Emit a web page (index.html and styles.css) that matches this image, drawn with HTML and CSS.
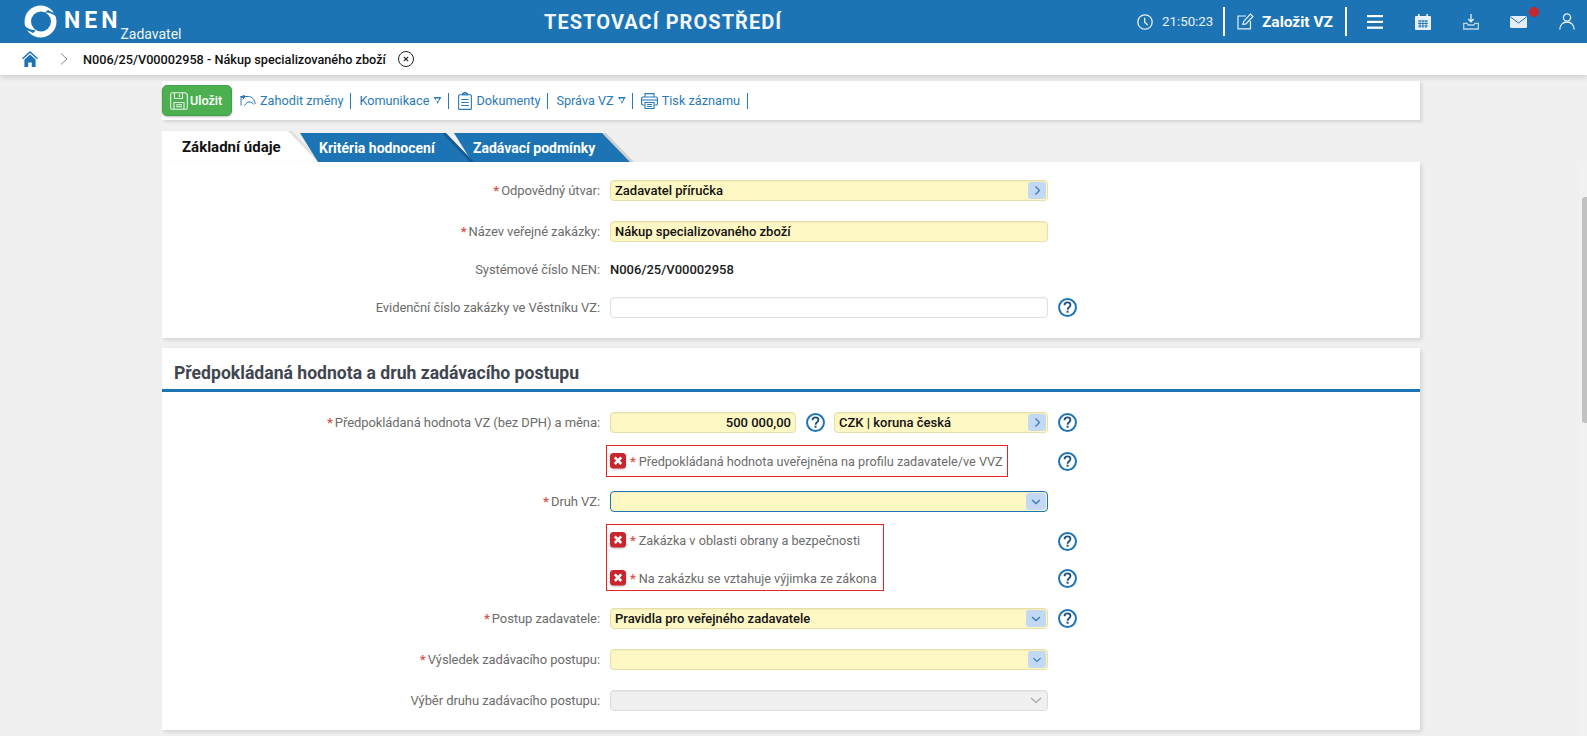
FILE: index.html
```html
<!DOCTYPE html>
<html lang="cs">
<head>
<meta charset="utf-8">
<title>NEN</title>
<link rel="stylesheet" href="styles.css">
</head>
<body>
<svg class="sprite" aria-hidden="true">
  <symbol id="help" viewBox="0 0 20 20">
    <circle cx="10" cy="10" r="8.900" fill="none" stroke="#1d74b4" stroke-width="2.100"/>
    <path d="M6.900 7.600C6.900 5.700 8.300 4.700 10 4.700s3.100 1 3.100 2.700c0 2.400-3 2.400-3 4.900" fill="none" stroke="#1f4f7c" stroke-width="1.900"/>
    <rect x="9" y="13.400" width="2.100" height="2.100" fill="#1f4f7c"/>
  </symbol>
  <symbol id="err" viewBox="0 0 16 16">
    <rect x="0" y="0" width="16" height="15.500" rx="3.500" fill="#c9252d"/>
    <path d="M4.800 4.400l6.400 6.600M11.200 4.400l-6.400 6.600" stroke="#fff" stroke-width="2.600"/>
  </symbol>
  <symbol id="chev-down" viewBox="0 0 20 17">
    <path d="M6 7l4 3.600L14 7" fill="none" stroke="#3b78bd" stroke-width="1.300"/>
  </symbol>
  <symbol id="chev-right" viewBox="0 0 18 17">
    <path d="M7.500 4.500l4 4-4 4" fill="none" stroke="#3b78bd" stroke-width="1.300"/>
  </symbol>
</svg>

<header class="topbar">
  <div class="brand">
    <svg class="logo" width="33" height="33" viewBox="0 0 33 33">
      <circle cx="16.500" cy="16.500" r="16" fill="#fff"/>
      <circle cx="17" cy="16.500" r="10" fill="#1d74b4"/>
      <path d="M21 7.500C25 7.800 29 8.600 33 12L33 8C30 8 27 7 24 5z" fill="#1d74b4"/>
      <path d="M12 25.500C8.500 25 4 24 0 20.500L0 25C3 25 6 26 9 28z" fill="#1d74b4"/>
    </svg>
    <span class="brand-name">NEN</span>
    <span class="brand-role">Zadavatel</span>
  </div>
  <div class="env">TESTOVACÍ PROSTŘEDÍ</div>
  <div class="top-actions">
    <svg class="ti-clock" width="16" height="16" viewBox="0 0 16 16" fill="none" stroke="#e8f1f8" stroke-width="1.300"><circle cx="8" cy="8" r="7.200"/><path d="M7.700 3.800V8.200L10.700 11"/></svg>
    <span class="clock">21:50:23</span>
    <span class="vline"></span>
    <a class="create">
      <svg width="17" height="17" viewBox="0 0 17 17" fill="none" stroke="#e8f1f8" stroke-width="1.200"><path d="M9 3H1v13h12.500V8"/><path d="M6 11.500l.6-3L13.500 1l2.500 2.400-7 7.500z"/></svg>
      <span>Založit VZ</span>
    </a>
    <span class="vline vline-2"></span>
    <svg class="ti" width="16" height="14" viewBox="0 0 16 14" fill="#fff"><rect y="0" width="16" height="2.200"/><rect y="5.800" width="16" height="2.200"/><rect y="11.600" width="16" height="2.200"/></svg>
    <svg class="ti" width="16" height="16" viewBox="0 0 16 16"><rect y="2" width="16" height="14" rx="1" fill="#e8f1f8"/><rect x="3" y="0" width="1.600" height="3" fill="#fff"/><rect x="11.400" y="0" width="1.600" height="3" fill="#fff"/><path d="M3 7h10M3 9.500h10M3 12h10M5 6v8M8 6v8M11 6v8" stroke="#1d74b4" stroke-width=".9"/></svg>
    <svg class="ti" width="16" height="16" viewBox="0 0 16 16" fill="none" stroke="#e8f1f8" stroke-width="1.300"><path d="M8 0v7.500M5.300 5l2.700 2.800L10.700 5"/><path d="M.7 9.300v5.700h14.600V9.300h-3.500l-1 1.700H5.200l-1-1.700z" stroke="#bcd5e9"/></svg>
    <span class="mail">
      <svg width="17" height="12" viewBox="0 0 17 12"><rect width="17" height="12" rx="1.500" fill="#e4eef6"/><path d="M.5 1l8 6 8-6" fill="none" stroke="#1d74b4" stroke-width="1"/></svg>
      <span class="dot"></span>
    </span>
    <svg class="ti" width="16" height="17" viewBox="0 0 16 17" fill="none" stroke="#e8f1f8" stroke-width="1.300"><circle cx="8" cy="4.500" r="3.600"/><path d="M.8 16.500c0-4.300 3-7.500 7.200-7.500s7.200 3.200 7.200 7.500"/></svg>
  </div>
</header>

<nav class="crumbs">
  <svg class="home" width="16" height="16" viewBox="0 0 16 16"><path d="M8 0L0 7.300l1 1L8 2l7 6.300 1-1z" fill="#1d74b4"/><path d="M2.400 8.600L8 3.600l5.600 5V16H9.800v-4.500H6.200V16H2.400z" fill="#1d74b4"/></svg>
  <svg class="sep" width="8" height="12" viewBox="0 0 8 12"><path d="M1 .5L7 6l-6 5.500" fill="none" stroke="#8a8a8a" stroke-width="1"/></svg>
  <span class="crumb">N006/25/V00002958 - Nákup specializovaného zboží</span>
  <svg class="x" width="16" height="16" viewBox="0 0 16 16" fill="none" stroke="#222"><circle cx="8" cy="8" r="7.500"/><path d="M5.800 5.800l4.400 4.400M10.200 5.800l-4.400 4.400" stroke-width="1.200"/></svg>
</nav>

<main class="page">
  <div class="toolbar">
    <button class="save">
      <svg width="18" height="18" viewBox="0 0 18 18" fill="none" stroke="#e8f5e9" stroke-width="1.100"><path d="M2 .8h13.500l1.800 1.800v13.200a1.500 1.500 0 0 1-1.500 1.500H2A1.500 1.500 0 0 1 .7 15.800V2A1.500 1.500 0 0 1 2 .8z"/><path d="M4.500 1v5.500h8V1M9.500 2.300v3M4 17v-6.500h10V17M6 12.700h6M6 14.800h6"/></svg>
      <span>Uložit</span>
    </button>
    <a class="tool">
      <svg width="16" height="11" viewBox="0 0 16 11" fill="none" stroke="#2a7ab8" stroke-width="1"><path d="M1 10.500V2.500h3"/><path d="M.2 1.500h8.300c3.500 0 6 3 6.800 7.500"/><path d="M2.500 4.500l3-3-3-1.500"/><path d="M4.500 10.500L7.500 7h1.500c2 0 4 1 5 2.500"/></svg>
      Zahodit změny
    </a>
    <i class="div"></i>
    <a class="tool">Komunikace <b class="tri"></b></a>
    <i class="div"></i>
    <a class="tool tool-ic">
      <svg width="14" height="18" viewBox="0 0 14 18" fill="none" stroke="#2a7ab8" stroke-width="1.100"><rect x=".6" y="2.800" width="12.800" height="14.600" rx="1"/><path d="M4.500 2.800V1.500h1.500V.6h2v.9h1.500v1.300zM3.200 7.500h7.600M3.200 10.500h7.600M3.200 13.500h7.600"/></svg>
      Dokumenty
    </a>
    <i class="div"></i>
    <a class="tool">Správa VZ <b class="tri"></b></a>
    <i class="div div-tight"></i>
    <a class="tool">
      <svg width="17" height="16" viewBox="0 0 17 16" fill="none" stroke="#2a7ab8" stroke-width="1.100"><path d="M4 4V.6h9V4"/><path d="M3.500 12H1.600a1 1 0 0 1-1-1V5a1 1 0 0 1 1-1h13.800a1 1 0 0 1 1 1v6a1 1 0 0 1-1 1h-1.900"/><path d="M1 7h15"/><rect x="4" y="9.500" width="9" height="6"/><path d="M6 11.500h5M6 13.500h5"/></svg>
      Tisk záznamu
    </a>
    <i class="div"></i>
  </div>

  <div class="tabs">
    <div class="tab tab-active"><span>Základní údaje</span></div>
    <div class="tab tab-blue tab-2"><span>Kritéria hodnocení</span></div>
    <div class="tab tab-blue tab-3"><span>Zadávací podmínky</span></div>
  </div>

  <section class="card card-first">
    <div class="row">
      <label class="lbl"><em>*</em>Odpovědný útvar:</label>
      <div class="field req"><span>Zadavatel příručka</span><span class="btn"><svg width="18" height="17"><use href="#chev-right"/></svg></span></div>
    </div>
    <div class="row tight">
      <label class="lbl"><em>*</em>Název veřejné zakázky:</label>
      <div class="field req"><span>Nákup specializovaného zboží</span></div>
    </div>
    <div class="row tight">
      <label class="lbl">Systémové číslo NEN:</label>
      <div class="value">N006/25/V00002958</div>
    </div>
    <div class="row last">
      <label class="lbl">Evidenční číslo zakázky ve Věstníku VZ:</label>
      <div class="field"></div>
      <svg class="help"><use href="#help"/></svg>
    </div>
  </section>

  <section class="card">
    <h2 class="title">Předpokládaná hodnota a druh zadávacího postupu</h2>
    <div class="body">
      <div class="row r-price">
        <label class="lbl"><em>*</em>Předpokládaná hodnota VZ (bez DPH) a měna:</label>
        <div class="pair">
          <div class="field req amount"><span>500 000,00</span></div>
          <svg class="help help-inner"><use href="#help"/></svg>
          <div class="field req currency"><span>CZK | koruna česká</span><span class="btn"><svg width="18" height="17"><use href="#chev-right"/></svg></span></div>
        </div>
        <svg class="help"><use href="#help"/></svg>
      </div>

      <div class="err-single">
        <span></span>
        <div class="errbox">
          <div class="err"><svg class="erri"><use href="#err"/></svg><em>*</em>Předpokládaná hodnota uveřejněna na profilu zadavatele/ve VVZ</div>
        </div>
        <svg class="help"><use href="#help"/></svg>
      </div>

      <div class="row r-druh">
        <label class="lbl"><em>*</em>Druh VZ:</label>
        <div class="field req focus"><span></span><span class="btn wide"><svg width="20" height="17"><use href="#chev-down"/></svg></span></div>
      </div>

      <div class="err-group">
        <div class="errbox errbox-2">
          <div class="err"><svg class="erri"><use href="#err"/></svg><em>*</em>Zakázka v oblasti obrany a bezpečnosti</div>
          <div class="err"><svg class="erri"><use href="#err"/></svg><em>*</em>Na zakázku se vztahuje výjimka ze zákona</div>
        </div>
        <svg class="help help-a"><use href="#help"/></svg>
        <svg class="help help-b"><use href="#help"/></svg>
      </div>

      <div class="row">
        <label class="lbl"><em>*</em>Postup zadavatele:</label>
        <div class="field req"><span>Pravidla pro veřejného zadavatele</span><span class="btn wide"><svg width="20" height="17"><use href="#chev-down"/></svg></span></div>
        <svg class="help"><use href="#help"/></svg>
      </div>
      <div class="row">
        <label class="lbl"><em>*</em>Výsledek zadávacího postupu:</label>
        <div class="field req"><span></span><span class="btn"><svg width="18" height="17"><use href="#chev-down"/></svg></span></div>
      </div>
      <div class="row last">
        <label class="lbl">Výběr druhu zadávacího postupu:</label>
        <div class="field disabled"><span></span><svg class="dis-chev" width="14" height="10" viewBox="0 0 14 10"><path d="M2 2l5 4.500L12 2" fill="none" stroke="#a8a8a8" stroke-width="1.200"/></svg></div>
      </div>
    </div>
  </section>
</main>

<div class="scroll-track"><div class="scroll-thumb"></div></div>
</body>
</html>
```

FILE: styles.css
```css
* { box-sizing: border-box; }
html, body { margin: 0; height: 736px; overflow: hidden; }
body {
  background: #f0f0f0;
  font-family: Roboto, "Liberation Sans", sans-serif;
  font-size: 13px;
  color: #6c6c6c;
  position: relative;
}
.sprite { display: none; }

/* top bar */
.topbar {
  height: 43px;
  background: #1d74b4;
  display: flex;
  align-items: center;
  position: relative;
  color: #fff;
}
.brand { display: flex; align-items: center; padding-left: 24px; width: 544px; height: 43px; }
.logo { flex: none; margin-top: -1px; }
.brand-name {
  font-size: 23px;
  font-weight: 700;
  letter-spacing: 4px;
  margin-left: 7px;
  line-height: 1;
  margin-top: -2px;
}
.brand-role {
  font-size: 14px;
  margin-left: -1px;
  align-self: flex-end;
  line-height: 16px;
  margin-bottom: 1px;
  color: #eef5fa;
}
.env { font-size: 20px; font-weight: 700; letter-spacing: 1.050px; width: 240px; white-space: nowrap; color: #f2f7fb; }
.top-actions { margin-left: auto; display: flex; align-items: center; height: 43px; padding-right: 12px; }
.ti-clock { margin-right: 9px; }
.clock { font-size: 13.300px; color: #e8f1f8; width: 49px; white-space: nowrap; }
.vline { width: 2px; height: 29px; background: #fff; margin: 0 12px; }
.vline-2 { margin-right: 20px; }
.create { display: flex; align-items: center; gap: 8px; font-size: 15.500px; font-weight: 700; color: #fff; white-space: nowrap; width: 96px; }
.ti { margin-right: 32px; flex: none; }
.ti:last-child { margin-right: 0; }
.mail { position: relative; display: block; width: 17px; height: 12px; margin: 0 32px 0 -1px; }
.mail svg { display: block; }
.dot { position: absolute; width: 10px; height: 10px; border-radius: 50%; background: #c9252d; left: 19px; top: -9px; }

/* breadcrumb */
.crumbs {
  height: 32px;
  background: #fff;
  display: flex;
  align-items: center;
  padding-left: 22px;
  box-shadow: 0 2px 6px rgba(0, 0, 0, .16);
  position: relative;
}
.sep { margin-left: 22px; }
.crumb { margin-left: 15px; font-weight: 500; color: #111; font-size: 12.700px; white-space: nowrap; }
.x { margin-left: 12px; }

/* page */
.page { width: 1258px; margin-left: 162px; }
.toolbar {
  margin-top: 6px;
  height: 39px;
  background: #fff;
  box-shadow: 2px 2px 3px rgba(0, 0, 0, .12);
  display: flex;
  align-items: center;
  color: #2a7ab8;
}
.save {
  width: 70px;
  height: 31px;
  background: #4caf50;
  border: 1px solid #43a047;
  border-radius: 5px;
  box-shadow: 0 1px 2px rgba(0, 0, 0, .25);
  display: flex;
  align-items: center;
  gap: 2px;
  padding: 0 0 0 7px;
  color: #fff;
  font: 500 12.600px Roboto, sans-serif;
  margin-right: 8px;
}
.tool { display: flex; align-items: center; gap: 4px; white-space: nowrap; font-size: 12.700px; }
.tool-ic { margin-left: 1px; }
.tri {
  width: 8px;
  height: 7px;
  background: #2a7ab8;
  clip-path: polygon(0 0, 100% 0, 50% 100%, 41% 62%, 59% 62%, 72% 20%, 28% 20%, 41% 62%);
}
.div { width: 1px; height: 16px; background: #2a7ab8; margin: 0 8px 0 7px; }
.div-tight { margin-left: 6px; }

/* tabs */
.tabs { display: flex; height: 31px; margin-top: 11px; position: relative; }
.tab { position: relative; height: 31px; font-size: 14px; font-weight: 700; display: flex; align-items: flex-end; }
.tab span { position: relative; z-index: 2; white-space: nowrap; }
.tab-active { width: 156px; color: #111; padding: 0 0 6px 20px; font-size: 15px; }
.tab-active::before {
  content: "";
  position: absolute;
  inset: 0;
  background: #fff;
  clip-path: polygon(0 0, 126px 0, 156px 31px, 0 31px);
}
.tab-active::after {
  content: "";
  position: absolute;
  left: 126px;
  top: 0;
  width: 30px;
  height: 31px;
  background: #e2e2e2;
  clip-path: polygon(0 0, 4px 0, 30px 27px, 30px 31px);
}
.tab-blue { color: #fff; padding-bottom: 6px; }
.tab-blue::before {
  content: "";
  position: absolute;
  top: 2px;
  left: 0;
  right: 0;
  bottom: 0;
  background: #d0d0d0;
  clip-path: polygon(0 0, calc(100% - 28px) 0, 100% 100%, 18px 100%);
  transform: translateX(4px);
}
.tab-blue::after {
  content: "";
  position: absolute;
  top: 2px;
  left: 0;
  right: 0;
  bottom: 0;
  background: #1d74b4;
  clip-path: polygon(0 0, calc(100% - 28px) 0, 100% 100%, 18px 100%);
}
.tab-2 { width: 170px; margin-left: -18px; padding-left: 19px; z-index: 2; }
.tab-3 { width: 176px; margin-left: -16px; padding-left: 19px; z-index: 1; }
.tab-2::before { background: #155a8e; }

/* cards */
.card {
  background: #fff;
  box-shadow: 2px 2px 4px rgba(0, 0, 0, .12);
  margin-bottom: 10px;
}
.card-first { padding: 18px 0 20px; position: relative; }
.title {
  margin: 0;
  height: 44px;
  line-height: 50px;
  padding-left: 12px;
  font-size: 17.600px;
  font-weight: 700;
  color: #3f464f;
  border-bottom: 3px solid #1d74b4;
}
.body { padding: 20px 0 19px; }

/* form rows */
.row { display: grid; grid-template-columns: 448px 438px 1fr; align-items: center; height: 21px; margin-bottom: 20px; }
.row.tight { margin-bottom: 17px; }
.row.last { margin-bottom: 0; }
.lbl { text-align: right; padding-right: 10px; white-space: nowrap; color: #6c6c6c; letter-spacing: -.08px; }
.lbl em, .err em { font-style: normal; font-weight: 700; color: #d9534f; margin-right: 2px; }
.err em { margin-right: 3px; }
.value { font-weight: 500; color: #1a1a1a; }
.field {
  height: 21px;
  border: 1px solid #e1e1e1;
  border-radius: 4px;
  background: #fff;
  display: flex;
  align-items: center;
  justify-content: space-between;
  padding-left: 4px;
  color: #111;
  font-weight: 500;
  box-shadow: inset 0 1px 1px rgba(0, 0, 0, .04);
  white-space: nowrap;
}
.field.req { background: #fdf7c3; border-color: #e6dfa8; }
.field.focus { border-color: #1d74b4; }
.field.disabled { background: #f0f0f0; border-color: #dcdcdc; justify-content: flex-end; padding-right: 4px; }
.dis-chev { display: block; }
.btn {
  width: 18px;
  height: 17px;
  margin-right: 1px;
  background: #c3d9f3;
  border-radius: 3px;
  flex: none;
}
.btn.wide { width: 20px; }
.btn svg { display: block; }
.help { width: 19px; height: 19px; margin-left: 10px; display: block; }

.pair { display: flex; align-items: center; }
.amount { width: 186px; padding-right: 4px; justify-content: flex-end; }
.help-inner { margin: 0 9px 0 10px; flex: none; }
.currency { width: 214px; }
.r-price { margin-bottom: 12px; }
.r-druh { margin-bottom: 12px; }

/* error boxes */
.err-single {
  display: grid;
  grid-template-columns: 448px 438px 1fr;
  align-items: center;
  height: 32px;
  margin-bottom: 14px;
}
.errbox {
  border: 1px solid #e3242b;
  margin-left: -4px;
  justify-self: start;
  padding: 0 4px 0 3px;
  white-space: nowrap;
}
.err { display: flex; align-items: center; height: 30px; color: #6c6c6c; font-size: 12.700px; }
.erri { width: 16px; height: 16px; margin-right: 4px; flex: none; filter: drop-shadow(0 1px 1px rgba(0, 0, 0, .25)); }
.err-group {
  display: grid;
  grid-template-columns: 448px 438px 1fr;
  grid-template-rows: 34px 33px;
  align-items: center;
  margin-bottom: 17px;
}
.errbox-2 { grid-column: 2; grid-row: 1 / 3; height: 67px; padding-top: 4px; padding-right: 6px; }
.errbox-2 .err { height: 22px; }
.errbox-2 .err + .err { margin-top: 16px; }
.help-a { grid-column: 3; grid-row: 1; }
.help-b { grid-column: 3; grid-row: 2; align-self: end; margin-bottom: 3px; }

/* scrollbar */
.scroll-track { position: absolute; top: 162px; right: 0; bottom: 0; width: 7px; background: #f1f1f1; }
.scroll-thumb { position: absolute; top: 35px; right: 0; width: 5px; height: 226px; background: #c1c1c1; border-radius: 3px 0 0 3px; }
```
